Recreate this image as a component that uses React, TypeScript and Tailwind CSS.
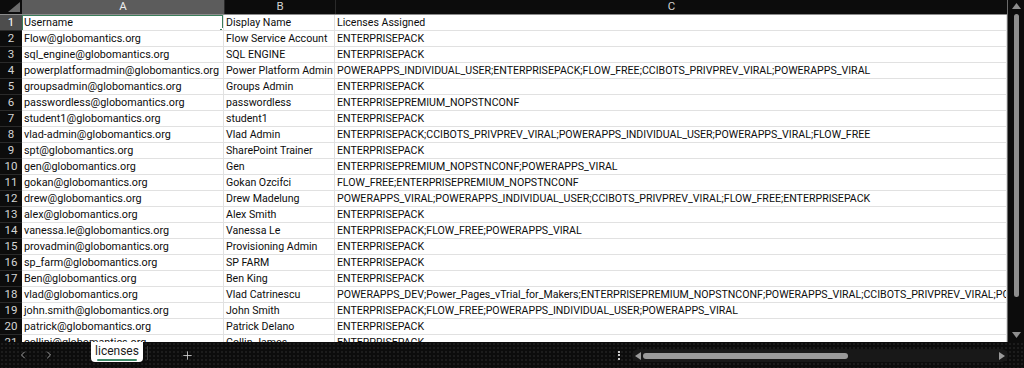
import { ChevronLeft, ChevronRight, Plus } from "lucide-react";

// rows of the sheet
const rows: [string, string, string][] = [
  ["Username", "Display Name", "Licenses Assigned"],
  ["Flow@globomantics.org", "Flow Service Account", "ENTERPRISEPACK"],
  ["sql_engine@globomantics.org", "SQL ENGINE", "ENTERPRISEPACK"],
  [
    "powerplatformadmin@globomantics.org",
    "Power Platform Admin",
    "POWERAPPS_INDIVIDUAL_USER;ENTERPRISEPACK;FLOW_FREE;CCIBOTS_PRIVPREV_VIRAL;POWERAPPS_VIRAL",
  ],
  ["groupsadmin@globomantics.org", "Groups Admin", "ENTERPRISEPACK"],
  ["passwordless@globomantics.org", "passwordless", "ENTERPRISEPREMIUM_NOPSTNCONF"],
  ["student1@globomantics.org", "student1", "ENTERPRISEPACK"],
  [
    "vlad-admin@globomantics.org",
    "Vlad Admin",
    "ENTERPRISEPACK;CCIBOTS_PRIVPREV_VIRAL;POWERAPPS_INDIVIDUAL_USER;POWERAPPS_VIRAL;FLOW_FREE",
  ],
  ["spt@globomantics.org", "SharePoint Trainer", "ENTERPRISEPACK"],
  ["gen@globomantics.org", "Gen", "ENTERPRISEPREMIUM_NOPSTNCONF;POWERAPPS_VIRAL"],
  ["gokan@globomantics.org", "Gokan Ozcifci", "FLOW_FREE;ENTERPRISEPREMIUM_NOPSTNCONF"],
  [
    "drew@globomantics.org",
    "Drew Madelung",
    "POWERAPPS_VIRAL;POWERAPPS_INDIVIDUAL_USER;CCIBOTS_PRIVPREV_VIRAL;FLOW_FREE;ENTERPRISEPACK",
  ],
  ["alex@globomantics.org", "Alex Smith", "ENTERPRISEPACK"],
  ["vanessa.le@globomantics.org", "Vanessa Le", "ENTERPRISEPACK;FLOW_FREE;POWERAPPS_VIRAL"],
  ["provadmin@globomantics.org", "Provisioning Admin", "ENTERPRISEPACK"],
  ["sp_farm@globomantics.org", "SP FARM", "ENTERPRISEPACK"],
  ["Ben@globomantics.org", "Ben King", "ENTERPRISEPACK"],
  [
    "vlad@globomantics.org",
    "Vlad Catrinescu",
    "POWERAPPS_DEV;Power_Pages_vTrial_for_Makers;ENTERPRISEPREMIUM_NOPSTNCONF;POWERAPPS_VIRAL;CCIBOTS_PRIVPREV_VIRAL;POWERAPPS_INDIVIDUAL_USER",
  ],
  [
    "john.smith@globomantics.org",
    "John Smith",
    "ENTERPRISEPACK;FLOW_FREE;POWERAPPS_INDIVIDUAL_USER;POWERAPPS_VIRAL",
  ],
  ["patrick@globomantics.org", "Patrick Delano", "ENTERPRISEPACK"],
  ["collinj@globomantics.org", "Collin James", "ENTERPRISEPACK"],
];

const font = { fontFamily: "Roboto, 'Liberation Sans', sans-serif" };

const Triangle = ({ up }: { up?: boolean }) => (
  <svg width="9" height="6" viewBox="0 0 9 6">
    <path d={up ? "M4.5 0L9 6H0z" : "M0 0h9L4.5 6z"} fill="#8e8e8e" />
  </svg>
);

const SheetRow = ({ n, cells }: { n: number; cells: [string, string, string] }) => {
  const selected = n === 1;
  return (
    <div className="flex h-[16px] shrink-0">
      <div
        className={
          selected
            ? "w-[22px] shrink-0 flex items-center justify-center bg-[#4d4d4d] text-white text-[11.5px] border-b border-[#2a2a2a]"
            : "w-[22px] shrink-0 flex items-center justify-center bg-[#0c0c0c] text-[#d4d4d4] text-[11.5px] border-b border-[#2a2a2a]"
        }
      >
        {n}
      </div>
      <div className="relative w-[202px] shrink-0 bg-white border-b border-r border-[#e1e1e1] pl-[2px] text-[10.8px] leading-[15px] text-[#0d0d0d] whitespace-nowrap overflow-hidden">
        {cells[0]}
        {selected && (
          <>
            <div className="absolute inset-0 -bottom-px border border-[#3b7d5a]" />
            <div className="absolute right-0 -bottom-[2px] w-[4px] h-[4px] bg-[#3b7d5a] border border-white" />
          </>
        )}
      </div>
      <div className="w-[111px] shrink-0 bg-white border-b border-r border-[#e1e1e1] pl-[2px] text-[10.6px] leading-[15px] text-[#0d0d0d] whitespace-nowrap overflow-hidden">
        {cells[1]}
      </div>
      <div className="w-[672px] shrink-0 bg-white border-b border-r border-[#e1e1e1] pl-[2px] text-[10.6px] leading-[15px] text-[#0d0d0d] whitespace-nowrap overflow-hidden">
        {cells[2]}
      </div>
    </div>
  );
};

export default function App() {
  return (
    <div className="w-[1024px] h-[368px] flex flex-col bg-[#0c0c0c] overflow-hidden" style={font}>
      <div className="flex h-[342px] shrink-0">
        {/* grid */}
        <div className="w-[1008px] shrink-0 flex flex-col overflow-hidden border-r border-[#6a6a6a]">
          <div className="flex h-[15px] shrink-0 border-b border-[#8c8c8c] bg-[#0c0c0c] text-[11.5px] text-[#d0d0d0]">
            <div className="w-[22px] shrink-0 flex items-end justify-end p-[2px]">
              <svg width="12" height="10" viewBox="0 0 12 10">
                <path d="M12 0V10H0z" fill="#6b6b6b" />
              </svg>
            </div>
            <div className="w-[202px] shrink-0 flex items-center justify-center bg-[#5c5c5c] text-[#ececec]">A</div>
            <div className="w-[111px] shrink-0 flex items-center justify-center border-l border-[#2a2a2a]">B</div>
            <div className="w-[672px] shrink-0 flex items-center justify-center border-l border-[#2a2a2a]">C</div>
          </div>
          {rows.map((r, i) => (
            <SheetRow key={i} n={i + 1} cells={r} />
          ))}
        </div>
        {/* vertical scrollbar */}
        <div className="w-[16px] shrink-0 flex flex-col items-center pt-[3px] pb-[4px]">
          <Triangle up />
          <div className="mt-[5px] w-[5px] h-[283px] rounded-full bg-[#8e8e8e]" />
          <div className="flex-1" />
          <Triangle />
        </div>
      </div>
      {/* sheet tabs */}
      <div className="flex h-[26px] shrink-0 items-start bg-[#0c0c0c] bg-[radial-gradient(#1c1c1c_1px,transparent_1px)] bg-[size:4px_4px]">
        <div className="w-[91px] shrink-0 flex items-center h-[26px] pl-[17px] gap-[14px] text-[#b4b4b4]">
          <ChevronLeft size={12} strokeWidth={1.75} />
          <ChevronRight size={12} strokeWidth={1.75} />
        </div>
        <div className="w-[52px] h-[20px] shrink-0 bg-white rounded-b-[4px] flex flex-col items-center pt-[3px]">
          <span className="text-[12px] leading-[13px] text-[#1a1a1a]">licenses</span>
          <div className="mt-[1px] w-[40px] h-[2px] bg-[#3e8c69] rounded-full" />
        </div>
        <div className="ml-[4px] mt-[4px] w-px h-[14px] bg-[#3a3a3a]" />
        <div className="ml-[33px] h-[26px] flex items-center text-[#d8d8d8]">
          <Plus size={13} strokeWidth={1.5} />
        </div>
        <div className="flex-1" />
        <div className="h-[26px] flex flex-col justify-center gap-[1.5px] mr-[12px]">
          <div className="w-[2px] h-[2px] bg-[#c8c8c8]" />
          <div className="w-[2px] h-[2px] bg-[#c8c8c8]" />
          <div className="w-[2px] h-[2px] bg-[#c8c8c8]" />
        </div>
        <div className="mt-[7px] w-[376px] h-[13px] shrink-0 rounded-full bg-[#181818] flex items-center px-[3px]">
          <svg width="6" height="8" viewBox="0 0 6 8">
            <path d="M0 4L6 0V8z" fill="#9a9a9a" />
          </svg>
          <div className="ml-[2px] w-[205px] h-[6px] rounded-full bg-[#9a9a9a]" />
          <div className="flex-1" />
          <svg width="6" height="8" viewBox="0 0 6 8">
            <path d="M6 4L0 0V8z" fill="#9a9a9a" />
          </svg>
        </div>
        <div className="w-[16px] shrink-0" />
      </div>
    </div>
  );
}
